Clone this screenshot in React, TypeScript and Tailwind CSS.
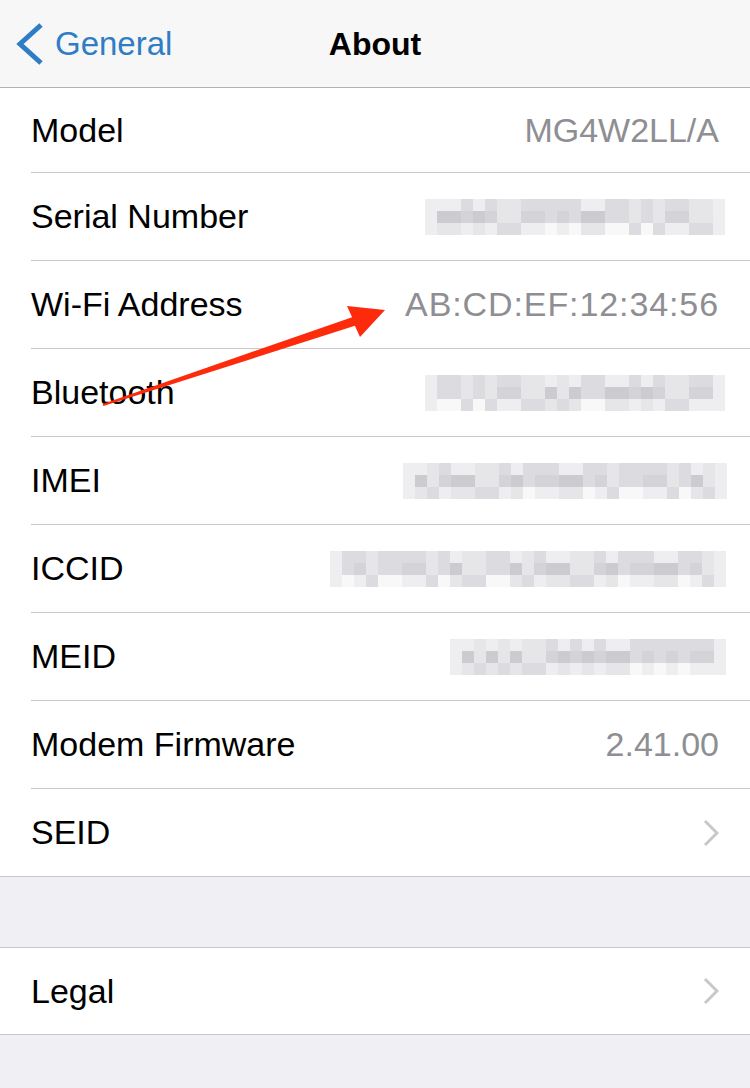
import React from "react";

const shades = [
  "bg-[#f8f8f9]",
  "bg-[#eeeef0]",
  "bg-[#e6e6e9]",
  "bg-[#dcdce0]",
  "bg-[#d4d4d8]",
  "bg-[#cbcbd0]",
];

const Blur: React.FC<{ cols: number; seed: number; rows?: number }> = ({ cols, seed, rows = 3 }) => {
  return (
    <div className="flex flex-col">
      {Array.from({ length: rows }).map((_, r) => (
        <div key={r} className="flex">
          {Array.from({ length: cols }).map((_, c) => {
            const h = (c * 37 + r * 11 + seed * 13 + ((c * c + seed) % 7)) % 4;
            const idx = r === 1 ? 2 + h : r === 0 ? Math.min(3, h + 1) : h;
            const edge = c === 0 || c === cols - 1;
            return <div key={c} className={`h-3 w-3 ${edge ? shades[1] : shades[idx]}`} />;
          })}
        </div>
      ))}
    </div>
  );
};

const Chevron = () => (
  <svg width="16" height="28" viewBox="0 0 16 28" fill="none">
    <polyline points="2,2 14,14 2,26" stroke="#c7c7cc" strokeWidth="3" strokeLinejoin="miter" />
  </svg>
);

type RowProps = {
  label: string;
  value?: React.ReactNode;
  h?: string;
  divider?: boolean;
};

const Row: React.FC<RowProps> = ({ label, value, h = "h-[88px]", divider = true }) => (
  <div className="pl-[31px]">
    <div
      className={`${h} flex items-center justify-between pr-[31px] ${
        divider ? "border-b border-[#c8c7cc]" : ""
      }`}
    >
      <span className="text-[34px] text-black">{label}</span>
      <span className="text-[34px] text-[#8e8e93]">{value}</span>
    </div>
  </div>
);

export default function App() {
  return (
    <div
      className="relative w-[750px] h-[1088px] overflow-hidden bg-[#efeff4]"
      style={{ fontFamily: '"Liberation Sans", Arial, sans-serif' }}
    >
      <header className="h-[88px] bg-[#f7f7f7] border-b border-[#b2b2b2] grid grid-cols-[1fr_auto_1fr] items-center">
        <div className="flex items-center pl-[15px]">
          <svg width="30" height="44" viewBox="0 0 30 44" fill="none">
            <polyline points="26,3 5,22 26,41" stroke="#2f7dc4" strokeWidth="5" />
          </svg>
          <span className="ml-[10px] text-[33px] text-[#2f7dc4]">General</span>
        </div>
        <h1 className="text-[32px] font-bold text-black">About</h1>
        <div />
      </header>

      <section className="bg-white border-b border-[#c8c7cc]">
        <Row label="Model" value="MG4W2LL/A" h="h-[85px]" />
        <Row label="Serial Number" value={<span className="mr-[-6px] block"><Blur cols={25} seed={1} /></span>} />
        <Row label="Wi-Fi Address" value={<span className="tracking-[0.9px]">AB:CD:EF:12:34:56</span>} />
        <Row label="Bluetooth" value={<span className="mr-[-6px] block"><Blur cols={25} seed={2} /></span>} />
        <Row label="IMEI" value={<span className="mr-[-8px] block"><Blur cols={27} seed={3} /></span>} />
        <Row label="ICCID" value={<span className="mr-[-7px] block"><Blur cols={33} seed={4} /></span>} />
        <Row label="MEID" value={<span className="mr-[-7px] block"><Blur cols={23} seed={5} /></span>} />
        <Row label="Modem Firmware" value="2.41.00" />
        <Row label="SEID" value={<span className="block"><Chevron /></span>} h="h-[87px]" divider={false} />
      </section>

      <div className="h-[70px]" />

      <section className="bg-white border-y border-[#c8c7cc]">
        <Row label="Legal" value={<span className="block"><Chevron /></span>} h="h-[86px]" divider={false} />
      </section>

      <svg
        className="absolute left-0 top-0 pointer-events-none"
        width="750"
        height="1088"
        viewBox="0 0 750 1088"
      >
        <polygon
          points="102.6,403.9 352.1,317.2 347,306 385,310 360,337 354.9,325.8 103.4,406.1"
          fill="#fd2a0c"
        />
      </svg>
    </div>
  );
}
